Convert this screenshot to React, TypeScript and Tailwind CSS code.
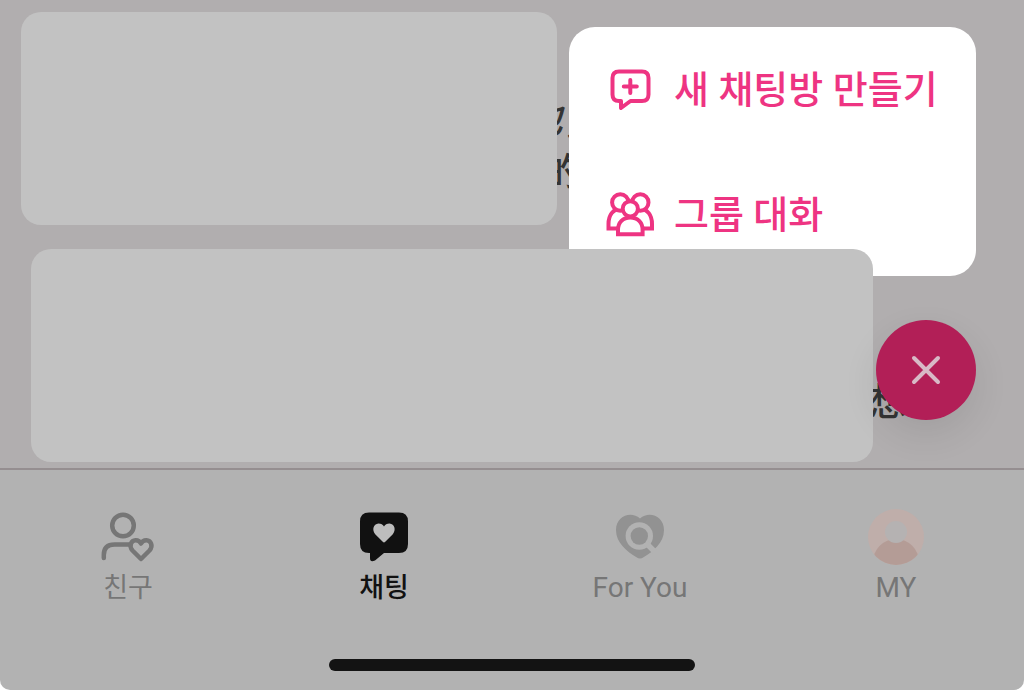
import type { ReactNode } from "react";

const HEART =
  "M28 33.500Q27.500 33.500 26.500 32.500L19.200 25.200C15.800 21 17.200 15 22.500 14.500C25 14.500 27 15.700 28 17.500C29 15.700 31 14.500 33.500 14.500C38.800 15 40.200 21 36.800 25.200L29.500 32.500Q28.500 33.500 28 33.500Z";

function NewChatIcon() {
  return (
    <svg viewBox="0 0 48 48" className="size-12 shrink-0" fill="none" stroke="currentColor" strokeWidth="4" strokeLinecap="round" strokeLinejoin="round" aria-hidden="true">
      <path d="M13 5.500H36Q42.500 5.500 42.500 12V28.500Q42.500 35 36 35H24.500L15 42V35H13Q6.500 35 6.500 28.500V12Q6.500 5.500 13 5.500Z" />
      <path d="M24.300 14V27M17.800 20.500H30.800" />
    </svg>
  );
}

function GroupIcon() {
  return (
    <svg viewBox="0 0 48 48" className="size-12 shrink-0" fill="#fff" stroke="currentColor" strokeWidth="4" aria-hidden="true">
      <path d="M14 37.500H2.500V33C2.500 24 7 18 14.500 18H34C41.500 18 46 24 46 33V37.500H34" />
      <circle cx="14.300" cy="11.500" r="8.200" />
      <circle cx="34.300" cy="11.500" r="8.200" />
      <path d="M12 43.300V39C12 31.500 17 26.500 24.300 26.500S36.600 31.500 36.600 39V43.300Z" />
      <circle cx="24.300" cy="17.800" r="7.600" />
    </svg>
  );
}

function FriendsIcon() {
  return (
    <svg viewBox="0 0 56 56" className="size-14" fill="none" stroke="currentColor" strokeWidth="4.500" strokeLinecap="round" strokeLinejoin="round" aria-hidden="true">
      <circle cx="23" cy="16.500" r="10.800" />
      <path d="M3.800 49V46Q3.800 35.600 14.500 35.600H29" />
      <path d="M41 50L32.500 41.500C28.300 36.600 31.500 31.500 35.500 31.300C38 31.200 40 32.600 41 34.600C42 32.600 44 31.200 46.500 31.300C50.500 31.500 53.700 36.600 49.500 41.500Z" />
    </svg>
  );
}

function ChatIcon() {
  return (
    <svg viewBox="0 0 56 56" className="size-14" aria-hidden="true">
      <path fill="currentColor" d="M13 3.500H43Q52 3.500 52 12.500V35Q52 44 43 44H28L19 51.500Q14 54 14 49V44H13Q4 44 4 35V12.500Q4 3.500 13 3.500Z" />
      <path fill="#bdbdbd" d={HEART} />
    </svg>
  );
}

function ForYouIcon() {
  return (
    <svg viewBox="0 0 56 56" className="size-14" aria-hidden="true">
      <path fill="#929292" d="M24.500 48.300C15 42.500 4 34 4 21C4 7 19 1.500 28 9.500C37 1.500 52 7 52 21C52 34 41 42.500 31.500 48.300Q28 50.800 24.500 48.300Z" />
      <circle cx="27.300" cy="27" r="13.700" fill="#b2b2b2" />
      <path d="M34 34L43 43" stroke="#b2b2b2" strokeWidth="5.500" />
      <circle cx="27.300" cy="27" r="8.700" fill="#929292" />
    </svg>
  );
}

function ProfileIcon() {
  return (
    <svg viewBox="0 0 56 56" className="size-14" aria-hidden="true">
      <clipPath id="avatar">
        <circle cx="28" cy="28" r="28" />
      </clipPath>
      <g clipPath="url(#avatar)">
        <rect width="56" height="56" fill="#bfaeaa" />
        <circle cx="28" cy="53" r="23" fill="#b49c96" />
        <circle cx="28" cy="23" r="11" fill="#b5b2b2" />
      </g>
    </svg>
  );
}

function MenuItem({ icon, label }: { icon: ReactNode; label: string }) {
  return (
    <button type="button" role="menuitem" className="flex h-[125px] w-full items-center gap-5 pl-[37px] text-[38px] leading-none font-medium whitespace-nowrap">
      {icon}
      <span>{label}</span>
    </button>
  );
}

function Tab({ icon, label, className }: { icon: ReactNode; label: string; className: string }) {
  return (
    <a href="#" className={`flex flex-col items-center gap-1 leading-[38px] ${className}`}>
      {icon}
      <span>{label}</span>
    </a>
  );
}

export default function App() {
  return (
    <div className="bg-white font-['Roboto','Noto_Sans_CJK_KR',sans-serif]">
      <div className="overflow-hidden rounded-b-[10px] bg-[#b2b2b2]">
        <main className="relative flex flex-col gap-6 bg-[#b1aeaf] pt-3 pb-1.5">
          <div className="relative mr-[467px] ml-[21px]">
            <p className="absolute top-[79px] left-full -ml-8 text-center font-['Noto_Sans_CJK_SC',sans-serif] text-[38px] leading-[52px] font-medium whitespace-nowrap text-[#343434]">
              <em>也，</em>
              <br />的
            </p>
            <div className="relative h-[213px] rounded-[20px] bg-[#c2c2c2]" />
          </div>
          <div className="relative z-10 mr-[151px] ml-[31px]">
            <p className="absolute top-[124px] left-full -ml-1 font-['Noto_Sans_CJK_SC',sans-serif] text-[38px] leading-[52px] font-medium text-[#343434]">想</p>
            <div className="relative h-[213px] rounded-[20px] bg-[#c2c2c2]" />
          </div>

          <div role="menu" className="absolute top-[27px] right-12 h-[249px] w-[407px] overflow-hidden rounded-[26px] bg-white text-[#ee3482]">
            <MenuItem icon={<NewChatIcon />} label="새 채팅방 만들기" />
            <MenuItem icon={<GroupIcon />} label="그룹 대화" />
          </div>

          <button type="button" aria-label="닫기" className="absolute right-12 bottom-12 z-20 flex size-[100px] items-center justify-center rounded-full bg-[#b21f57] shadow-[0_14px_36px_rgba(0,0,0,0.09)]">
            <svg viewBox="0 0 32 32" className="size-8" stroke="#d8b9c6" strokeWidth="4" strokeLinecap="round" aria-hidden="true">
              <path d="M4 4L28 28M28 4L4 28" />
            </svg>
          </button>
        </main>

        <nav className="border-t-2 border-[#958e90] pt-[39px] pb-[19px]">
          <div className="grid grid-cols-4">
            <Tab icon={<FriendsIcon />} label="친구" className="text-[27px] text-[#767676]" />
            <Tab icon={<ChatIcon />} label="채팅" className="text-[27px] font-medium text-[#111111]" />
            <Tab icon={<ForYouIcon />} label="For You" className="text-[28px] text-[#767676]" />
            <Tab icon={<ProfileIcon />} label="MY" className="text-[28px] text-[#767676]" />
          </div>
          <div className="mx-auto mt-[52px] h-3 w-[366px] rounded-full bg-[#131313]" />
        </nav>
      </div>
    </div>
  );
}
